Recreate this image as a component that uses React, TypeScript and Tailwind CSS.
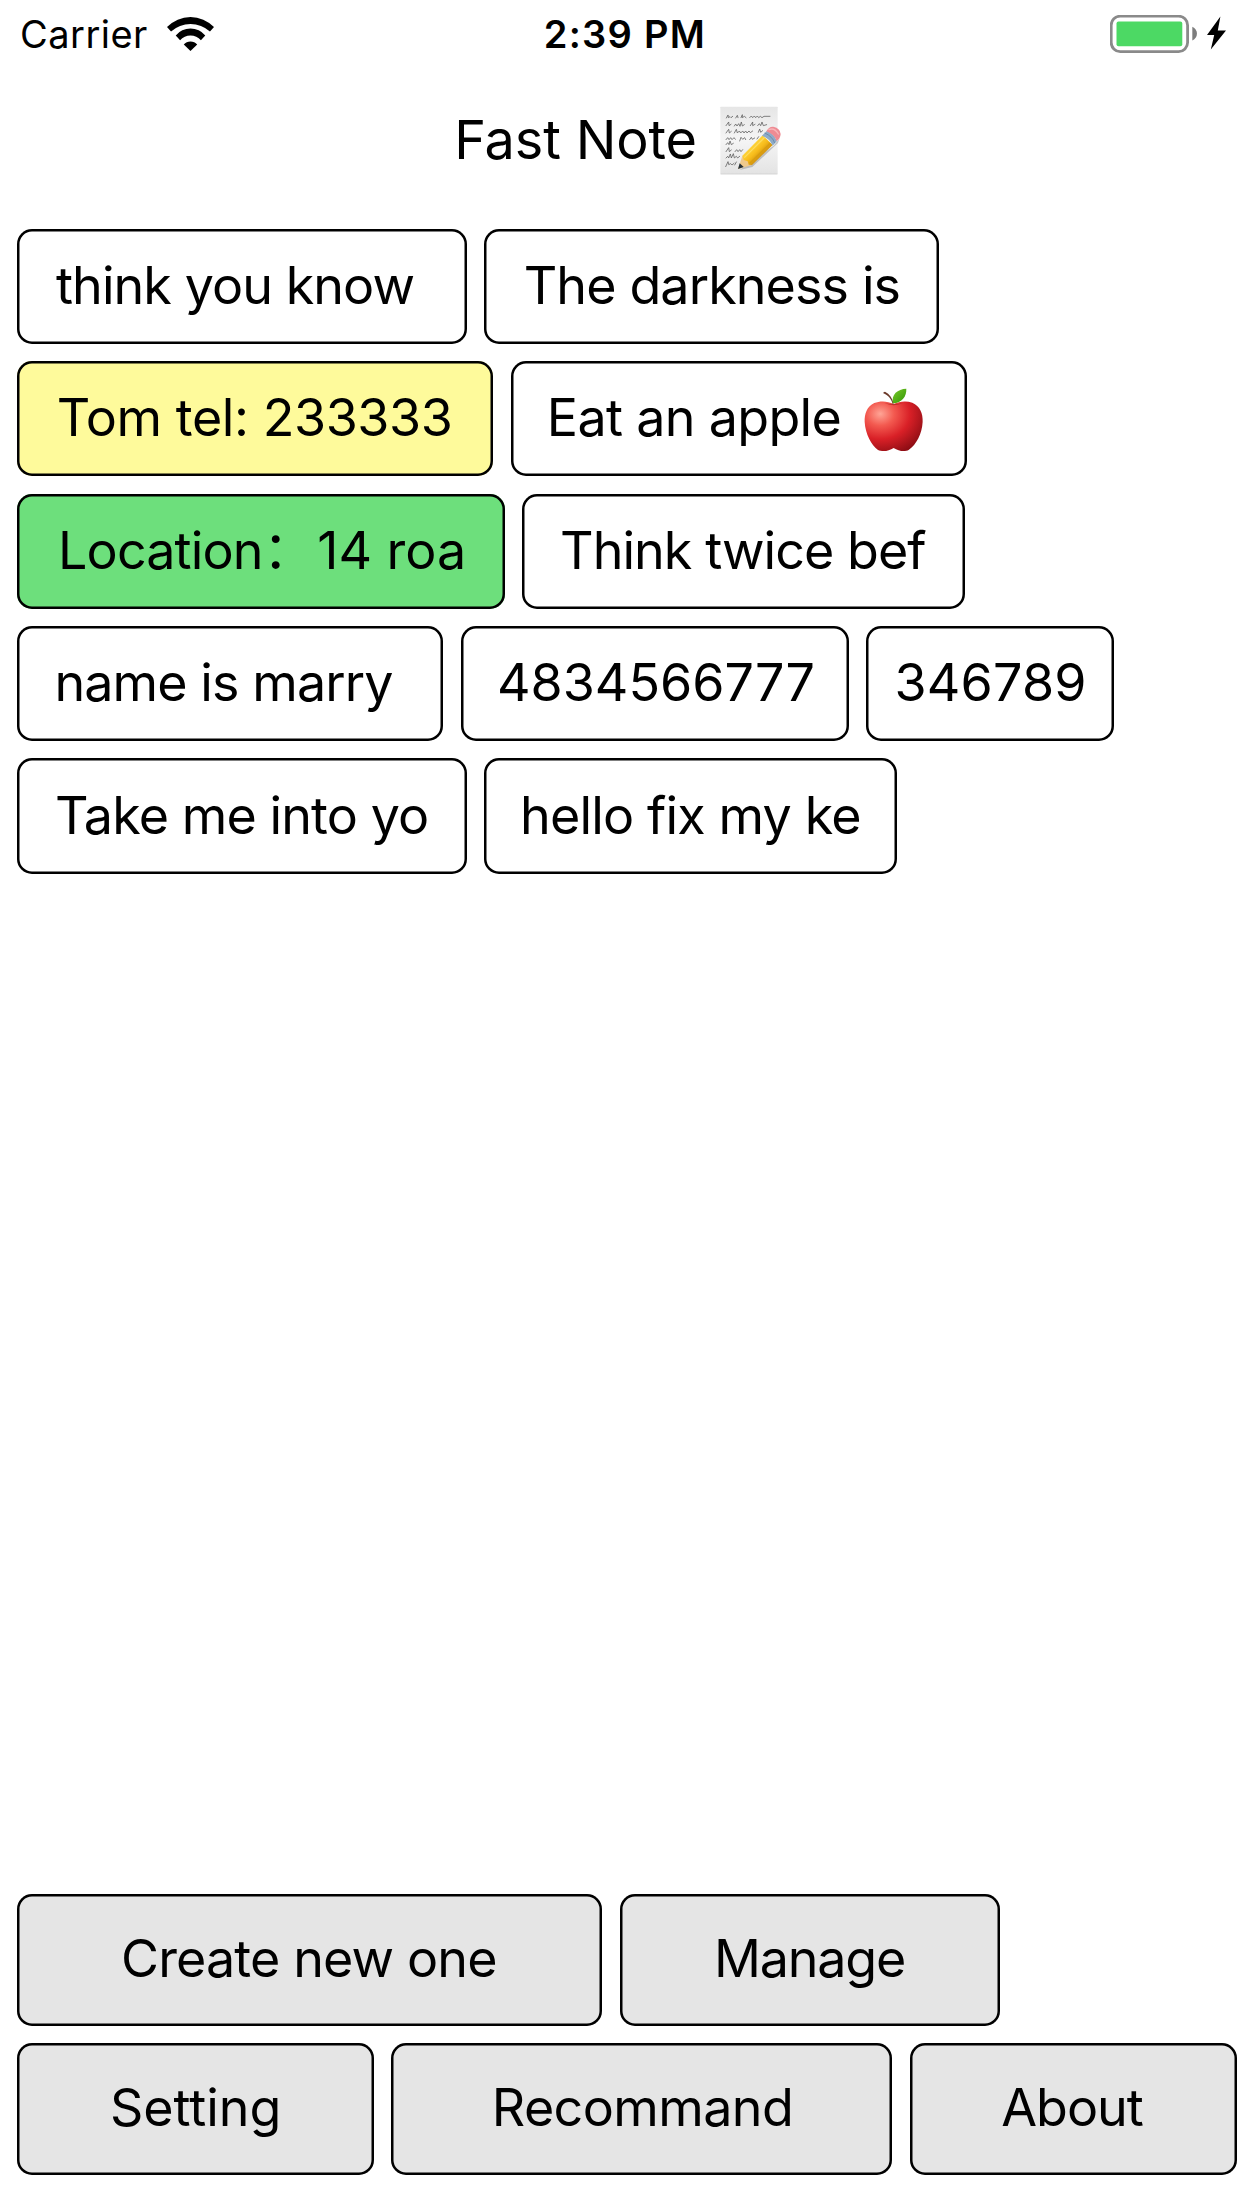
import type { ReactNode } from "react";

function WifiIcon() {
  return (
    <svg className="h-[34px] w-[47px] shrink-0" viewBox="501 48 140 101">
      <path d="M501 78A97 97 0 0 1 641 78L629 91A87 87 0 0 0 513 91Z" />
      <path d="M527 103A57 57 0 0 1 615 103L602 117A41 41 0 0 0 540 117Z" />
      <path d="M551 130A26 26 0 0 1 591 130L571 149Z" />
    </svg>
  );
}

function BatteryIcon() {
  return (
    <svg className="h-[38px] w-[118px] shrink-0" viewBox="1110 15 118 38">
      <rect x="1111.2" y="16.2" width="76.4" height="35.4" rx="9" fill="#fff" stroke="#8a8a8a" strokeWidth="2.8" />
      <rect x="1116.5" y="21.5" width="65.8" height="24.8" rx="2" fill="#4cd964" />
      <path d="M1192.3 26.8C1198.5 29.5 1198.5 37.8 1192.3 40.6Z" fill="#7d7d7d" />
      <path d="M1220.4 16.6L1207 35H1214.2L1210.8 49.6L1226 30.5H1217.8Z" fill="#000" />
    </svg>
  );
}

function MemoIcon() {
  return (
    <svg className="ml-[21px] mt-[3px] h-[73.3px] w-[66.7px] shrink-0" viewBox="55 25 200 220">
      <defs>
        <linearGradient id="paper" x1="0" y1="0" x2="0" y2="1">
          <stop offset="0" stopColor="#e6e6e6" />
          <stop offset="0.5" stopColor="#f5f5f5" />
          <stop offset="1" stopColor="#e3e3e3" />
        </linearGradient>
        <linearGradient id="wood" x1="0.3" y1="0.3" x2="0.7" y2="0.7">
          <stop offset="0" stopColor="#ffd83f" />
          <stop offset="0.5" stopColor="#f8bd1c" />
          <stop offset="1" stopColor="#c98a0a" />
        </linearGradient>
      </defs>
      <rect x="62" y="33" width="172" height="203" rx="2" fill="url(#paper)" />
      <path d="M63 235H233" stroke="#cfcfcf" strokeWidth="2" />
      <g fill="none" stroke="#5c5c5c" strokeWidth="2.3" strokeLinecap="round" strokeLinejoin="round">
        <path d="M80 67l5-9 1 8 5-3 3 3 5-4M108 67l5-8 2 7M124 66l4-9v9l6-4 5 4M150 66l5-5 4 5 5-5 4 5 5-5 4 5 5-4 5 4 6-4 18 0" />
        <path d="M79 90l8-11 1 11 6-4M104 91l4-6 4 6 5-7 4 8 4-13 3 12 6-4M152 90l7-11v11l7-4M174 90l5-6 4 6 4-11 4 11 10-3" />
        <path d="M79 112l8-11 2 11 6-5M104 112l6-11 3 11 6-6 4 6 6-6 4 6 5-6 4 6 6-6 4 5 7-5M176 110l4-10 3 10 6-5" />
        <path d="M79 132l5-6 4 6 5-6 4 6 6-6 4 5M120 136l4-11 5 6 6-5 3 6M150 132l5-7 3 6 7-4M172 130l5-7" />
        <path d="M79 147l5-6 4 6 3-11 4 11 6-4" />
        <path d="M79 168l8-12 2 12 6-5M106 168l5-6 4 6 5-6 4 6 5-6" />
        <path d="M79 187l5-5 3 5 5-12 3 12 6-13 3 13 6-5 4 5 6-5" />
        <path d="M78 213l7-15 2 9 6-3 4 4 6-5M105 208l5-9" />
      </g>
      <path d="M120 223L158 214L235 142L240 128L222 150Z" fill="#777" opacity="0.4" />
      <path d="M115 220L128 180L157 208Z" fill="#efc98c" />
      <path d="M115 220L120 203L132 214Z" fill="#26313a" />
      <path d="M128 180L189 119L219 148L157 208L147 207L144 197L132 193Z" fill="url(#wood)" />
      <path d="M134 186L195 125" stroke="#ffe472" strokeWidth="4" opacity="0.7" />
      <path d="M150 203L212 142" stroke="#d6980d" strokeWidth="4" opacity="0.7" />
      <path d="M187 120L201 106Q222 113 232 136L219 150Q211 129 187 120Z" fill="#8eabc8" />
      <path d="M195 112Q218 122 225 142" fill="none" stroke="#6685a5" strokeWidth="2.5" />
      <path d="M200 107Q207 92 221 93Q242 98 243 115Q242 129 231 137Q224 115 200 107Z" fill="#ee8b93" />
      <path d="M208 102Q224 95 236 115" fill="none" stroke="#f8b4b8" strokeWidth="4" strokeLinecap="round" />
    </svg>
  );
}

function AppleIcon() {
  return (
    <svg className="ml-[20.5px] mt-[2px] h-[66.7px] w-[63.3px] shrink-0" viewBox="35 30 190 200">
      <defs>
        <radialGradient id="skin" cx="0.27" cy="0.25" r="0.85">
          <stop offset="0" stopColor="#ffa596" />
          <stop offset="0.28" stopColor="#f35a50" />
          <stop offset="0.6" stopColor="#d92027" />
          <stop offset="1" stopColor="#8e0d14" />
        </radialGradient>
        <linearGradient id="leaf" x1="0" y1="0" x2="1" y2="1">
          <stop offset="0" stopColor="#7acb2a" />
          <stop offset="1" stopColor="#2f9305" />
        </linearGradient>
      </defs>
      <path d="M130 84C112 74 88 74 72 81C50 91 42 114 43 138C45 174 64 208 82 221C97 229 115 225 130 216C145 225 163 229 176 221C198 206 215 174 217 138C218 112 209 90 186 80C168 74 146 76 130 84Z" fill="url(#skin)" />
      <path d="M102 82Q130 93 158 82Q130 86 102 82Z" fill="#a01218" opacity="0.6" />
      <path d="M127 84C123 68 113 58 99 52Q98 47 104 47C118 54 126 66 130 83Z" fill="#6b3a2a" />
      <path d="M128 82C122 55 142 39 168 38C169 62 155 80 128 82Z" fill="url(#leaf)" />
    </svg>
  );
}

function Note({ box, children }: { box: string; children: ReactNode }) {
  return (
    <button
      className={`flex h-[115.3px] shrink-0 items-center whitespace-pre rounded-[15px] pb-px text-[52px] shadow-[inset_0_0_0_2.5px_#000] ${box}`}
    >
      {children}
    </button>
  );
}

function Action({ box, children }: { box: string; children: ReactNode }) {
  return (
    <button
      className={`flex h-[132px] shrink-0 items-center whitespace-pre rounded-[15px] bg-[#e5e5e5] pb-px text-[52px] shadow-[inset_0_0_0_2.5px_#000] ${box}`}
    >
      {children}
    </button>
  );
}

export default function App() {
  return (
    <div className="flex h-[2208px] w-[1242px] flex-col overflow-hidden bg-white font-['Inter','Noto_Sans_CJK_SC',sans-serif] text-black">
      <header className="flex h-[68px] shrink-0 items-center pl-[20px] pr-[14px] text-[38px]">
        <div className="flex w-[523.7px] items-center gap-[19px]">
          <span className="tracking-[0.46px]">Carrier</span>
          <WifiIcon />
        </div>
        <span className="flex-1 font-semibold tracking-[1.27px]">2:39 PM</span>
        <BatteryIcon />
      </header>

      <h1 className="flex h-[142px] shrink-0 items-center pl-[454.2px] text-[54px]">
        <span className="tracking-[-0.14px]">Fast Note</span>
        <MemoIcon />
      </h1>

      <main className="mt-[18.8px] flex flex-1 flex-col gap-[17.1px] pl-[17px]">
        <div className="flex gap-[17.5px]">
          <Note box="w-[449.5px] pl-[39px] tracking-[-0.93px]">think you know</Note>
          <Note box="w-[455px] pl-[39.7px] tracking-[-0.89px]">The darkness is</Note>
        </div>
        <div className="flex gap-[17.5px]">
          <Note box="w-[476px] bg-[#fefa9b] pl-[39.7px] tracking-[-0.43px]">Tom tel: 233333</Note>
          <Note box="w-[456.3px] pl-[36.3px] tracking-[-0.67px]">
            <span>Eat an apple</span>
            <AppleIcon />
          </Note>
        </div>
        <div className="flex gap-[17.5px]">
          <Note box="w-[487.5px] bg-[#6ddf7c] pl-[41px]">
            <span className="tracking-[-0.85px]">Location</span>
            <span className="leading-none">：</span>
            <span className="ml-[2.5px]">14 roa</span>
          </Note>
          <Note box="w-[443.3px] pl-[38px] tracking-[-0.94px]">Think twice bef</Note>
        </div>
        <div className="flex gap-[17.5px]">
          <Note box="w-[426.3px] pl-[37.4px] tracking-[-0.9px]">name is marry</Note>
          <Note box="w-[388px] pl-[36.2px]">4834566777</Note>
          <Note box="w-[247.5px] pl-[28.3px] tracking-[0.16px]">346789</Note>
        </div>
        <div className="flex gap-[17.5px]">
          <Note box="w-[449.5px] pl-[38px] tracking-[-0.9px]">Take me into yo</Note>
          <Note box="w-[413px] pl-[36px] tracking-[-0.84px]">hello fix my ke</Note>
        </div>
      </main>

      <footer className="flex shrink-0 flex-col gap-[17px] pb-[33.3px] pl-[17px]">
        <div className="flex gap-[17.3px]">
          <Action box="w-[585.4px] pl-[104.1px] tracking-[-0.87px]">Create new one</Action>
          <Action box="w-[380.5px] pl-[94.3px] tracking-[-1.2px]">Manage</Action>
        </div>
        <div className="flex gap-[17.3px]">
          <Action box="w-[357px] pl-[92.9px] tracking-[-0.02px]">Setting</Action>
          <Action box="w-[501px] pl-[100.5px] tracking-[-0.6px]">Recommand</Action>
          <Action box="w-[327.5px] pl-[91.6px] tracking-[-1px]">About</Action>
        </div>
      </footer>
    </div>
  );
}
